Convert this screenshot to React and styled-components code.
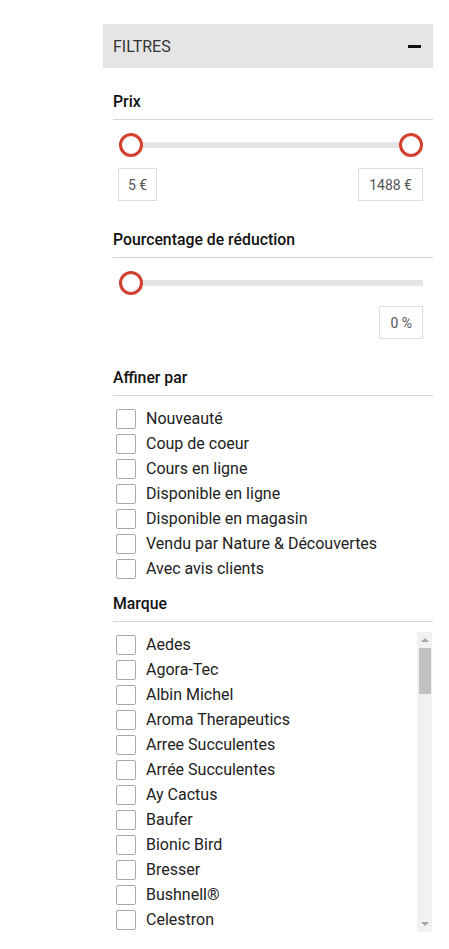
import React from 'react';
import styled, { createGlobalStyle } from 'styled-components';

const GlobalStyle = createGlobalStyle`
  body {
    margin: 0;
    background: #fff;
    font-family: Roboto, 'Liberation Sans', sans-serif;
    color: #222;
  }
`

const Panel = styled.aside`
  width: 330px;
  margin: 24px 0 0 103px;
`
const Header = styled.div`
  display: flex;
  align-items: center;
  justify-content: space-between;
  height: 44px;
  padding: 0 12px 0 10px;
  background-color: #e5e5e5;
  color: #333;
  font-size: 16px;
  text-transform: uppercase;
`
const Minus = styled.span`
  display: block;
  width: 13px;
  height: 3px;
  background-color: #111;
`
const Body = styled.div`
  padding-left: 10px;
`
const SectionTitle = styled.h3`
  margin: ${p => p.$top}px 0 0;
  padding-bottom: 7px;
  border-bottom: 1px solid #d6d6d6;
  font-size: 15.8px;
  font-weight: 500;
  line-height: 20px;
  color: #111;
`
const SliderRow = styled.div`
  display: flex;
  align-items: center;
  justify-content: space-between;
  height: 24px;
  margin: 13px 10px 0 6px;
  background: linear-gradient(#e5e5e5, #e5e5e5) center / 100% 6px no-repeat;
`
const Thumb = styled.span`
  box-sizing: border-box;
  width: 24px;
  height: 24px;
  border: 3px solid #d2402f;
  border-radius: 50%;
  background-color: #fff;
`
const ValueRow = styled.div`
  display: flex;
  justify-content: ${p => (p.$end ? 'flex-end' : 'space-between')};
  margin: 11px 10px 0 5px;
`
const ValueBox = styled.span`
  display: flex;
  align-items: center;
  box-sizing: border-box;
  height: 33px;
  padding: 0 ${p => p.$pad}px;
  border: 1px solid #ddd;
  font-size: 14px;
  color: #555;
`
const CheckList = styled.ul`
  list-style: none;
  margin: ${p => p.$top}px 0 0;
  padding: 0;
`
const ScrollWrap = styled.div`
  display: flex;
  height: 300px;
  margin-top: 10px;
`
const ScrollList = styled(CheckList)`
  flex: 1;
  margin: 0;
  overflow: hidden;
`
const CheckRow = styled.li`
  display: flex;
  align-items: center;
  height: 25px;
  padding-left: 3px;
  font-size: 16px;
  color: #222;
`
const Box = styled.span`
  box-sizing: border-box;
  width: 20px;
  height: 20px;
  margin-right: 10px;
  border: 1px solid #a9a9a9;
  border-radius: 2px;
  background: #fff;
`
const ScrollBar = styled.div`
  display: flex;
  flex-direction: column;
  align-items: center;
  width: 15px;
  margin-right: 1px;
  background-color: #f1f1f1;
`
const Arrow = styled.span`
  display: flex;
  align-items: center;
  justify-content: center;
  height: 16px;
  &::after {
    content: '';
    border-left: 4px solid transparent;
    border-right: 4px solid transparent;
    ${p => (p.$down ? 'border-top' : 'border-bottom')}: 4px solid #a3a3a3;
  }
`
const ScrollThumb = styled.span`
  width: 12px;
  height: 46px;
  background-color: #c1c1c1;
`
const Spacer = styled.span`
  flex: 1;
`

const refine = [
  'Nouveauté',
  'Coup de coeur',
  'Cours en ligne',
  'Disponible en ligne',
  'Disponible en magasin',
  'Vendu par Nature & Découvertes',
  'Avec avis clients'
];

const brands = [
  'Aedes',
  'Agora-Tec',
  'Albin Michel',
  'Aroma Therapeutics',
  'Arree Succulentes',
  'Arrée Succulentes',
  'Ay Cactus',
  'Baufer',
  'Bionic Bird',
  'Bresser',
  'Bushnell®',
  'Celestron'
];

const Check = ({ label }) => (
  <CheckRow>
    <Box />
    {label}
  </CheckRow>
);

const App = () => {
  return (
    <>
      <GlobalStyle />
      <Panel>
        <Header>
          Filtres
          <Minus />
        </Header>
        <Body>
          <SectionTitle $top={24}>Prix</SectionTitle>
          <SliderRow>
            <Thumb />
            <Thumb />
          </SliderRow>
          <ValueRow>
            <ValueBox $pad={9}>5 €</ValueBox>
            <ValueBox $pad={10}>1488 €</ValueBox>
          </ValueRow>

          <SectionTitle $top={29}>Pourcentage de réduction</SectionTitle>
          <SliderRow>
            <Thumb />
          </SliderRow>
          <ValueRow $end>
            <ValueBox $pad={10}>0 %</ValueBox>
          </ValueRow>

          <SectionTitle $top={29}>Affiner par</SectionTitle>
          <CheckList $top={10}>
            {refine.map(item => <Check key={item} label={item} />)}
          </CheckList>

          <SectionTitle $top={13}>Marque</SectionTitle>
          <ScrollWrap>
            <ScrollList>
              {brands.map(item => <Check key={item} label={item} />)}
            </ScrollList>
            <ScrollBar>
              <Arrow />
              <ScrollThumb />
              <Spacer />
              <Arrow $down />
            </ScrollBar>
          </ScrollWrap>
        </Body>
      </Panel>
    </>
  );
}

export default App;
